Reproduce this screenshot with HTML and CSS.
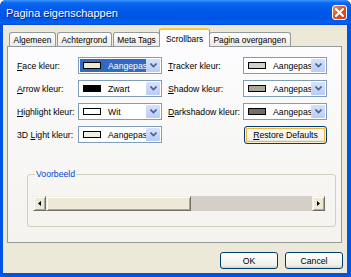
FILE: index.html
```html
<!DOCTYPE html>
<html>
<head>
    <title>Pagina eigenschappen</title>
    <link rel="stylesheet" href="styles.css">
</head>
<body>
    <div class="window">
        <div class="titlebar">
            <span class="title">Pagina eigenschappen</span>
            <span class="close">
                <svg width="9" height="9" viewBox="0 0 9 9"><path d="M1 1 L8 8 M8 1 L1 8" stroke="#fff" stroke-width="2" stroke-linecap="square"/></svg>
            </span>
        </div>
        <div class="frame">
            <div class="tabs">
                <div class="tab">Algemeen</div>
                <div class="tab">Achtergrond</div>
                <div class="tab">Meta Tags</div>
                <div class="tab active">Scrollbars</div>
                <div class="tab">Pagina overgangen</div>
            </div>
            <div class="panel">
                <div class="form-grid">
                    <label class="label"><span><u>F</u>ace kleur:</span></label>
                    <div class="combo focus">
                        <div class="value"><span class="swatch face"></span><span class="text">Aangepas</span></div>
                        <div class="drop"><svg width="7" height="5" viewBox="0 0 7 5"><path d="M0.5 0.5 L3.5 3.5 L6.5 0.5" fill="none" stroke="#4D6185" stroke-width="1.6"/></svg></div>
                    </div>
                    <label class="label right"><span><u>T</u>racker kleur:</span></label>
                    <div class="combo">
                        <div class="value"><span class="swatch tracker"></span><span class="text">Aangepas</span></div>
                        <div class="drop"><svg width="7" height="5" viewBox="0 0 7 5"><path d="M0.5 0.5 L3.5 3.5 L6.5 0.5" fill="none" stroke="#4D6185" stroke-width="1.6"/></svg></div>
                    </div>

                    <label class="label"><span><u>A</u>rrow kleur:</span></label>
                    <div class="combo">
                        <div class="value"><span class="swatch arrow"></span><span class="text">Zwart</span></div>
                        <div class="drop"><svg width="7" height="5" viewBox="0 0 7 5"><path d="M0.5 0.5 L3.5 3.5 L6.5 0.5" fill="none" stroke="#4D6185" stroke-width="1.6"/></svg></div>
                    </div>
                    <label class="label right"><span><u>S</u>hadow kleur:</span></label>
                    <div class="combo">
                        <div class="value"><span class="swatch shadow"></span><span class="text">Aangepas</span></div>
                        <div class="drop"><svg width="7" height="5" viewBox="0 0 7 5"><path d="M0.5 0.5 L3.5 3.5 L6.5 0.5" fill="none" stroke="#4D6185" stroke-width="1.6"/></svg></div>
                    </div>

                    <label class="label"><span><u>H</u>ighlight kleur:</span></label>
                    <div class="combo">
                        <div class="value"><span class="swatch highlight"></span><span class="text">Wit</span></div>
                        <div class="drop"><svg width="7" height="5" viewBox="0 0 7 5"><path d="M0.5 0.5 L3.5 3.5 L6.5 0.5" fill="none" stroke="#4D6185" stroke-width="1.6"/></svg></div>
                    </div>
                    <label class="label right"><span><u>D</u>arkshadow kleur:</span></label>
                    <div class="combo">
                        <div class="value"><span class="swatch darkshadow"></span><span class="text">Aangepas</span></div>
                        <div class="drop"><svg width="7" height="5" viewBox="0 0 7 5"><path d="M0.5 0.5 L3.5 3.5 L6.5 0.5" fill="none" stroke="#4D6185" stroke-width="1.6"/></svg></div>
                    </div>

                    <label class="label"><span>3D <u>L</u>ight kleur:</span></label>
                    <div class="combo">
                        <div class="value"><span class="swatch light"></span><span class="text">Aangepas</span></div>
                        <div class="drop"><svg width="7" height="5" viewBox="0 0 7 5"><path d="M0.5 0.5 L3.5 3.5 L6.5 0.5" fill="none" stroke="#4D6185" stroke-width="1.6"/></svg></div>
                    </div>
                    <div></div>
                    <button class="button restore"><u>R</u>estore Defaults</button>
                </div>

                <fieldset class="preview">
                    <legend>Voorbeeld</legend>
                    <div class="scrollbar">
                        <div class="sb-btn"><svg width="3" height="5" viewBox="0 0 3 5"><path d="M3 0 L0 2.5 L3 5 Z" fill="#000"/></svg></div>
                        <div class="sb-thumb"></div>
                        <div class="sb-track"></div>
                        <div class="sb-btn"><svg width="3" height="5" viewBox="0 0 3 5"><path d="M0 0 L3 2.5 L0 5 Z" fill="#000"/></svg></div>
                    </div>
                </fieldset>
            </div>
            <div class="buttons">
                <button class="button">OK</button>
                <button class="button">Cancel</button>
            </div>
        </div>
    </div>
</body>
</html>
```

FILE: styles.css
```css
/* Pagina */
body {
    margin: 0;
    font-family: "Liberation Sans", Arial, sans-serif;
    font-size: 8.7px;
    color: #000;
}

.window {
    width: 351px;
    height: 277px;
    display: flex;
    flex-direction: column;
    background-color: #0054E3;
    border-radius: 6px 6px 0 0;
    overflow: hidden;
}

/* Titelbalk */
.titlebar {
    height: 25px;
    flex: none;
    display: flex;
    align-items: center;
    justify-content: space-between;
    padding: 0 4px 0 6px;
    background: linear-gradient(#3D95FF 0%, #0A66F0 12%, #0058E8 45%, #0055E5 75%, #0062F2 92%, #0047D0 100%);
}

.title {
    color: #fff;
    font-size: 11px;
    text-shadow: 1px 1px 0 #0A1E8C;
}

.close {
    width: 15px;
    height: 15px;
    box-sizing: border-box;
    border: 1px solid #fff;
    border-radius: 3px;
    background: linear-gradient(135deg, #EC8D70 0%, #D9552D 50%, #C4411B 100%);
    display: flex;
    align-items: center;
    justify-content: center;
}

/* Venster inhoud */
.frame {
    flex: 1;
    display: flex;
    flex-direction: column;
    background-color: #ECE9D8;
    margin: 0 4px 4px 3px;
    padding: 3px 5px 0 4px;
}

/* Tabs */
.tabs {
    display: flex;
    align-items: flex-end;
    height: 18px;
    padding-left: 2px;
    font-size: 8.4px;
}

.tab {
    height: 14px;
    box-sizing: border-box;
    padding: 0 3.6px;
    display: flex;
    align-items: center;
    border: 1px solid #919B9C;
    border-bottom: none;
    border-radius: 3px 3px 0 0;
    background: linear-gradient(#FFFFFF, #ECEBE6);
    margin-right: 1px;
}

.tab.active {
    height: 19px;
    margin: 0 -1px -1px -2px;
    padding: 0 5.6px;
    background: #FCFCFE;
    border-top: 2px solid #FFC83C;
    position: relative;
    z-index: 1;
}

/* Tab paneel */
.panel {
    height: 197px;
    box-sizing: border-box;
    border: 1px solid #919B9C;
    background: linear-gradient(#FCFCFE, #F4F3EE);
    padding: 10px 0 0 9px;
}

.form-grid {
    display: grid;
    grid-template-columns: 61px 84px 81px 84px;
    grid-auto-rows: 17px;
    row-gap: 6px;
}

.label {
    display: flex;
    align-items: center;
    white-space: nowrap;
}

.label.right {
    padding-left: 6px;
}

.combo {
    display: flex;
    box-sizing: border-box;
    border: 1px solid #7F9DB9;
    background-color: #fff;
    padding: 1px;
}

.value {
    flex: 1;
    display: flex;
    align-items: center;
    padding-left: 3px;
    overflow: hidden;
    white-space: nowrap;
}

.combo.focus .value {
    background-color: #316AC5;
    color: #fff;
}

.swatch {
    flex: none;
    width: 18px;
    height: 7px;
    box-sizing: border-box;
    border: 1px solid #000;
}

.swatch.face { background-color: #ECE9D8; }
.swatch.arrow { background-color: #000; }
.swatch.highlight { background-color: #fff; }
.swatch.light { background-color: #F1EFE2; }
.swatch.tracker { background-color: #D4D0C8; }
.swatch.shadow { background-color: #ACA899; }
.swatch.darkshadow { background-color: #716F64; }

.text {
    margin-left: 7px;
}

.drop {
    width: 14px;
    flex: none;
    display: flex;
    align-items: center;
    justify-content: center;
    background: linear-gradient(#D6E2FD, #B8CCF8);
    border-radius: 1px;
}

/* Knoppen */
.button {
    font-family: inherit;
    font-size: inherit;
    color: #000;
    box-sizing: border-box;
    border: 1px solid #003C74;
    border-radius: 3px;
    background: linear-gradient(#FFFFFF, #F0F0EA 80%, #D6D0C5);
    padding: 0;
}

.restore {
    height: 18px;
    margin-left: 1px;
    box-shadow: inset 0 0 0 1px #FFF0CF, inset 0 0 0 2px #F8B330;
}

/* Voorbeeld */
.preview {
    margin: 26px 0 0 10px;
    width: 309px;
    height: 58px;
    box-sizing: border-box;
    border: 1px solid #D0D0BF;
    border-radius: 3px;
    padding: 17px 10px 0 5px;
}

.preview legend {
    color: #0046D5;
    padding: 0 1px;
    margin-left: 2px;
}

.scrollbar {
    display: flex;
    height: 15px;
}

.sb-btn,
.sb-thumb {
    box-sizing: border-box;
    background-color: #ECE9D8;
    border: 1px solid;
    border-color: #F1EFE2 #716F64 #716F64 #F1EFE2;
    box-shadow: inset 1px 1px 0 #fff, inset -1px -1px 0 #ACA899;
}

.sb-btn {
    width: 13px;
    display: flex;
    align-items: center;
    justify-content: center;
}

.sb-thumb {
    width: 145px;
}

.sb-track {
    flex: 1;
    background-color: #D4D0C8;
}

.buttons {
    display: flex;
    justify-content: flex-end;
    gap: 7px;
    margin: 9px -1px 0 0;
}

.buttons .button {
    width: 58px;
    height: 17px;
}
```
